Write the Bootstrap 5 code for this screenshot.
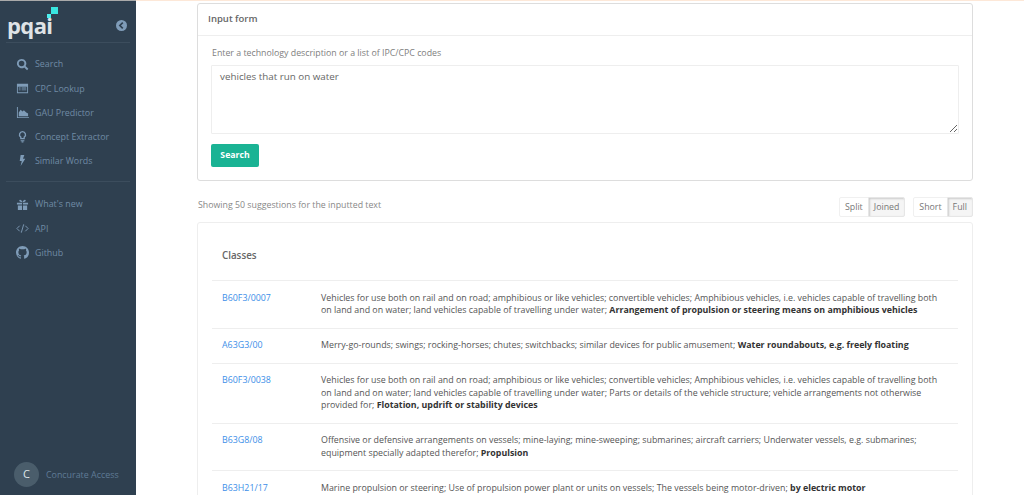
<!DOCTYPE html>
<html lang="en">
<head>
<meta charset="utf-8">
<title>pqai</title>
<link href="https://cdn.jsdelivr.net/npm/bootstrap@5.3.0/dist/css/bootstrap.min.css" rel="stylesheet">
<style>
html,body{height:495px;overflow:hidden}
body{font-family:"Open Sans",sans-serif;font-size:9px;color:#555;background:#fff}
.shell{height:495px}
.side{width:136px;flex:none;background:#2f4050;color:#6f8ba5;border-top:1px solid #aaa}
.logo-row{height:41px;padding:6px 9px 0 7px;position:relative}
.logo-txt{font-size:22px;font-weight:700;color:#dfe3e6;line-height:24px;letter-spacing:-.6px;margin-top:6px}
.logo-mark{position:absolute;left:46px;top:5px}
.back{width:11px;height:11px;margin-top:13px}
.sep{border-top:1px solid #3c4d5d;margin:0 6px}
.menu-a{padding:9px 0 8px}
.menu-b{padding-top:10px}
.menu-i{height:24.2px;padding-left:16px;gap:6px;color:#6f8ba5;font-size:8.9px;text-decoration:none}
.menu-i svg{width:13px;height:13px;flex:none;fill:#7f9cb8}
.user{padding:0 0 8px 14px;gap:7px;font-size:8.9px;color:#5f7b96}
.avatar{width:25px;height:25px;border-radius:50%;background:#4a5d6b;color:#dfe5ea;font-size:11px}
.content{padding:0 51px 0 61px;border-top:1px solid #fde8d8;min-width:0}
.panel{border:1px solid #ddd;border-radius:3px;margin-top:2px}
.panel-h{height:32px;padding:0 10px;border-bottom:1px solid #eee;font-size:9.5px;color:#666;font-weight:600}
.panel-b{padding:11px 13px 13px 13px}
.lbl{font-size:8.8px;color:#808080;line-height:13px;margin-bottom:5px;padding-left:1px}
.area{height:69px;border:1px solid #eee;border-radius:1px;font-size:9.8px;color:#666;padding:4px 8px;resize:both;box-shadow:none;font-family:inherit;line-height:14px}
.go{background:#1ab394;color:#fff;font-size:8.7px;font-weight:700;padding:0;width:48px;height:23px;border:0;border-radius:2px;margin-top:10px}
.bar{height:41px;padding-top:16px}
.note{color:#888;font-size:8.8px;padding:2px 0 0 1px}
.tog button{font-size:8.8px;color:#777;background:#fff;border:1px solid #f0f0f0;padding:0 5px;height:20px;line-height:17px;border-radius:2px 0 0 2px}
.tog button.on{background:#f5f5f5;border-color:#e6e6e6;box-shadow:inset 1px 1px 2px #ccc;border-radius:0 2px 2px 0;margin-left:-1px}
.res{border:1px solid #eee;border-radius:3px;padding:0 14px;height:300px}
.res-h{height:57px;font-size:9.8px;font-weight:600;color:#666;padding:26px 10px 0;line-height:14px}
.rw{border-top:1px solid #eee;padding:10.75px 10px;font-size:8.85px;line-height:12.5px;color:#555}
.code{width:99px;flex:none;color:#3d8fe8}
.rw b{font-weight:700;color:#333}
</style>
</head>
<body>
<div class="d-flex shell">
  <nav class="side d-flex flex-column">
    <div class="logo-row d-flex justify-content-between">
      <div class="logo-txt">pqai</div>
      <svg class="logo-mark" width="12" height="12" viewBox="0 0 12 12"><rect x="1" y="8" width="4" height="4" fill="#4df0ee"/><rect x="5" y="1" width="7" height="7" fill="#39e6e0"/></svg>
      <svg class="back" viewBox="0 0 12 12"><circle cx="6" cy="6" r="6" fill="#7f9cb8"/><path d="M7.400 2.800 4.200 6l3.200 3.200" fill="none" stroke="#2f4050" stroke-width="1.800"/></svg>
    </div>
    <div class="sep"></div>
    <div class="menu-a">
      <a class="menu-i d-flex align-items-center" href="#"><svg viewBox="0 0 14 14"><path d="M6 1a5 5 0 1 0 2.900 9.100l3 3 1.400-1.400-3-3A5 5 0 0 0 6 1zm0 2a3 3 0 1 1 0 6 3 3 0 0 1 0-6z"/></svg>Search</a>
      <a class="menu-i d-flex align-items-center" href="#"><svg viewBox="0 0 14 14"><path d="M1 2h12v10H1zm1 3v6h10V5zm1 1h2v1H3zm3 0h5v1H6zM3 8h2v1H3zm3 0h5v1H6z" fill-rule="evenodd"/></svg>CPC Lookup</a>
      <a class="menu-i d-flex align-items-center" href="#"><svg viewBox="0 0 14 14"><path d="M1 1h1v11h12v1H1zm2 10V7l2-3 2 2 1.500-1.500L11 7l2 1v3z"/></svg>GAU Predictor</a>
      <a class="menu-i d-flex align-items-center" href="#"><svg viewBox="0 0 14 14"><path d="M7 1a4 4 0 0 0-2.500 7.100V10h5V8.100A4 4 0 0 0 7 1zm0 1.500a2.500 2.500 0 0 1 1.500 4.500l-.4.300V8.500H5.900V7.300L5.500 7A2.500 2.500 0 0 1 7 2.500zM5 11h4v1H5zm1 1.500h2V13.500H6z" fill-rule="evenodd"/></svg>Concept Extractor</a>
      <a class="menu-i d-flex align-items-center" href="#"><svg viewBox="0 0 14 14"><path d="M5 1h4L7.500 5H10l-5 8 1.200-5.500H4z"/></svg>Similar Words</a>
    </div>
    <div class="sep"></div>
    <div class="menu-b">
      <a class="menu-i d-flex align-items-center" href="#"><svg viewBox="0 0 14 14"><path d="M1 5h5.500v2H1zm6.500 0H13v2H7.500zM2 8h4.500v5H2zm5.500 0H12v5H7.500zM7 4.500C5 4.500 3.500 4 3.500 2.800 3.500 1.500 5.500 1 7 4.500c1.500-3.500 3.500-3 3.500-1.700C10.500 4 9 4.500 7 4.500z"/></svg>What's new</a>
      <a class="menu-i d-flex align-items-center" href="#"><svg viewBox="0 0 14 14"><path d="M4 4 1 7l3 3M10 4l3 3-3 3M8.300 2.500 5.700 11.500" fill="none" stroke="#7f9cb8" stroke-width="1"/></svg>API</a>
      <a class="menu-i d-flex align-items-center" href="#"><svg viewBox="0 0 16 16"><path d="M8 0C3.580 0 0 3.580 0 8c0 3.540 2.290 6.530 5.470 7.590.4.070.55-.17.55-.38 0-.19-.01-.82-.01-1.490-2.010.37-2.530-.49-2.690-.94-.09-.23-.48-.94-.82-1.130-.28-.15-.68-.52-.01-.53.63-.01 1.080.58 1.230.82.720 1.210 1.870.87 2.330.66.070-.52.280-.87.510-1.070-1.780-.2-3.640-.89-3.640-3.950 0-.87.310-1.590.820-2.150-.08-.2-.36-1.020.08-2.120 0 0 .67-.21 2.200.82.640-.18 1.320-.27 2-.27s1.360.09 2 .27c1.530-1.040 2.200-.82 2.200-.82.440 1.100.16 1.920.08 2.120.51.560.82 1.270.82 2.150 0 3.070-1.870 3.750-3.650 3.950.29.250.54.730.54 1.480 0 1.070-.01 1.930-.01 2.200 0 .21.150.46.550.38A8.010 8.010 0 0 0 16 8c0-4.420-3.580-8-8-8z"/></svg>Github</a>
    </div>
    <div class="user d-flex align-items-center mt-auto">
      <div class="avatar d-flex align-items-center justify-content-center">C</div>
      <span>Concurate Access</span>
    </div>
  </nav>
  <main class="content flex-grow-1">
    <section class="panel">
      <div class="panel-h d-flex align-items-center">Input form</div>
      <div class="panel-b">
        <div class="lbl">Enter a technology description or a list of IPC/CPC codes</div>
        <textarea class="form-control area">vehicles that run on water</textarea>
        <button class="btn go" type="button">Search</button>
      </div>
    </section>
    <div class="bar d-flex justify-content-between align-items-start">
      <div class="note">Showing 50 suggestions for the inputted text</div>
      <div class="d-flex gap-2">
        <div class="tog d-flex"><button type="button">Split</button><button class="on" type="button">Joined</button></div>
        <div class="tog d-flex"><button type="button">Short</button><button class="on" type="button">Full</button></div>
      </div>
    </div>
    <section class="res">
      <div class="res-h">Classes</div>
      <div class="rw d-flex"><div class="code">B60F3/0007</div><div>Vehicles for use both on rail and on road; amphibious or like vehicles; convertible vehicles; Amphibious vehicles, i.e. vehicles capable of travelling both on land and on water; land vehicles capable of travelling under water; <b>Arrangement of propulsion or steering means on amphibious vehicles</b></div></div>
      <div class="rw d-flex"><div class="code">A63G3/00</div><div>Merry-go-rounds; swings; rocking-horses; chutes; switchbacks; similar devices for public amusement; <b>Water roundabouts, e.g. freely floating</b></div></div>
      <div class="rw d-flex"><div class="code">B60F3/0038</div><div>Vehicles for use both on rail and on road; amphibious or like vehicles; convertible vehicles; Amphibious vehicles, i.e. vehicles capable of travelling both on land and on water; land vehicles capable of travelling under water; Parts or details of the vehicle structure; vehicle arrangements not otherwise provided for; <b>Flotation, updrift or stability devices</b></div></div>
      <div class="rw d-flex"><div class="code">B63G8/08</div><div>Offensive or defensive arrangements on vessels; mine-laying; mine-sweeping; submarines; aircraft carriers; Underwater vessels, e.g. submarines; equipment specially adapted therefor; <b>Propulsion</b></div></div>
      <div class="rw d-flex"><div class="code">B63H21/17</div><div>Marine propulsion or steering; Use of propulsion power plant or units on vessels; The vessels being motor-driven; <b>by electric motor</b></div></div>
    </section>
  </main>
</div>
<script src="https://cdn.jsdelivr.net/npm/bootstrap@5.3.0/dist/js/bootstrap.bundle.min.js"></script>
</body>
</html>
